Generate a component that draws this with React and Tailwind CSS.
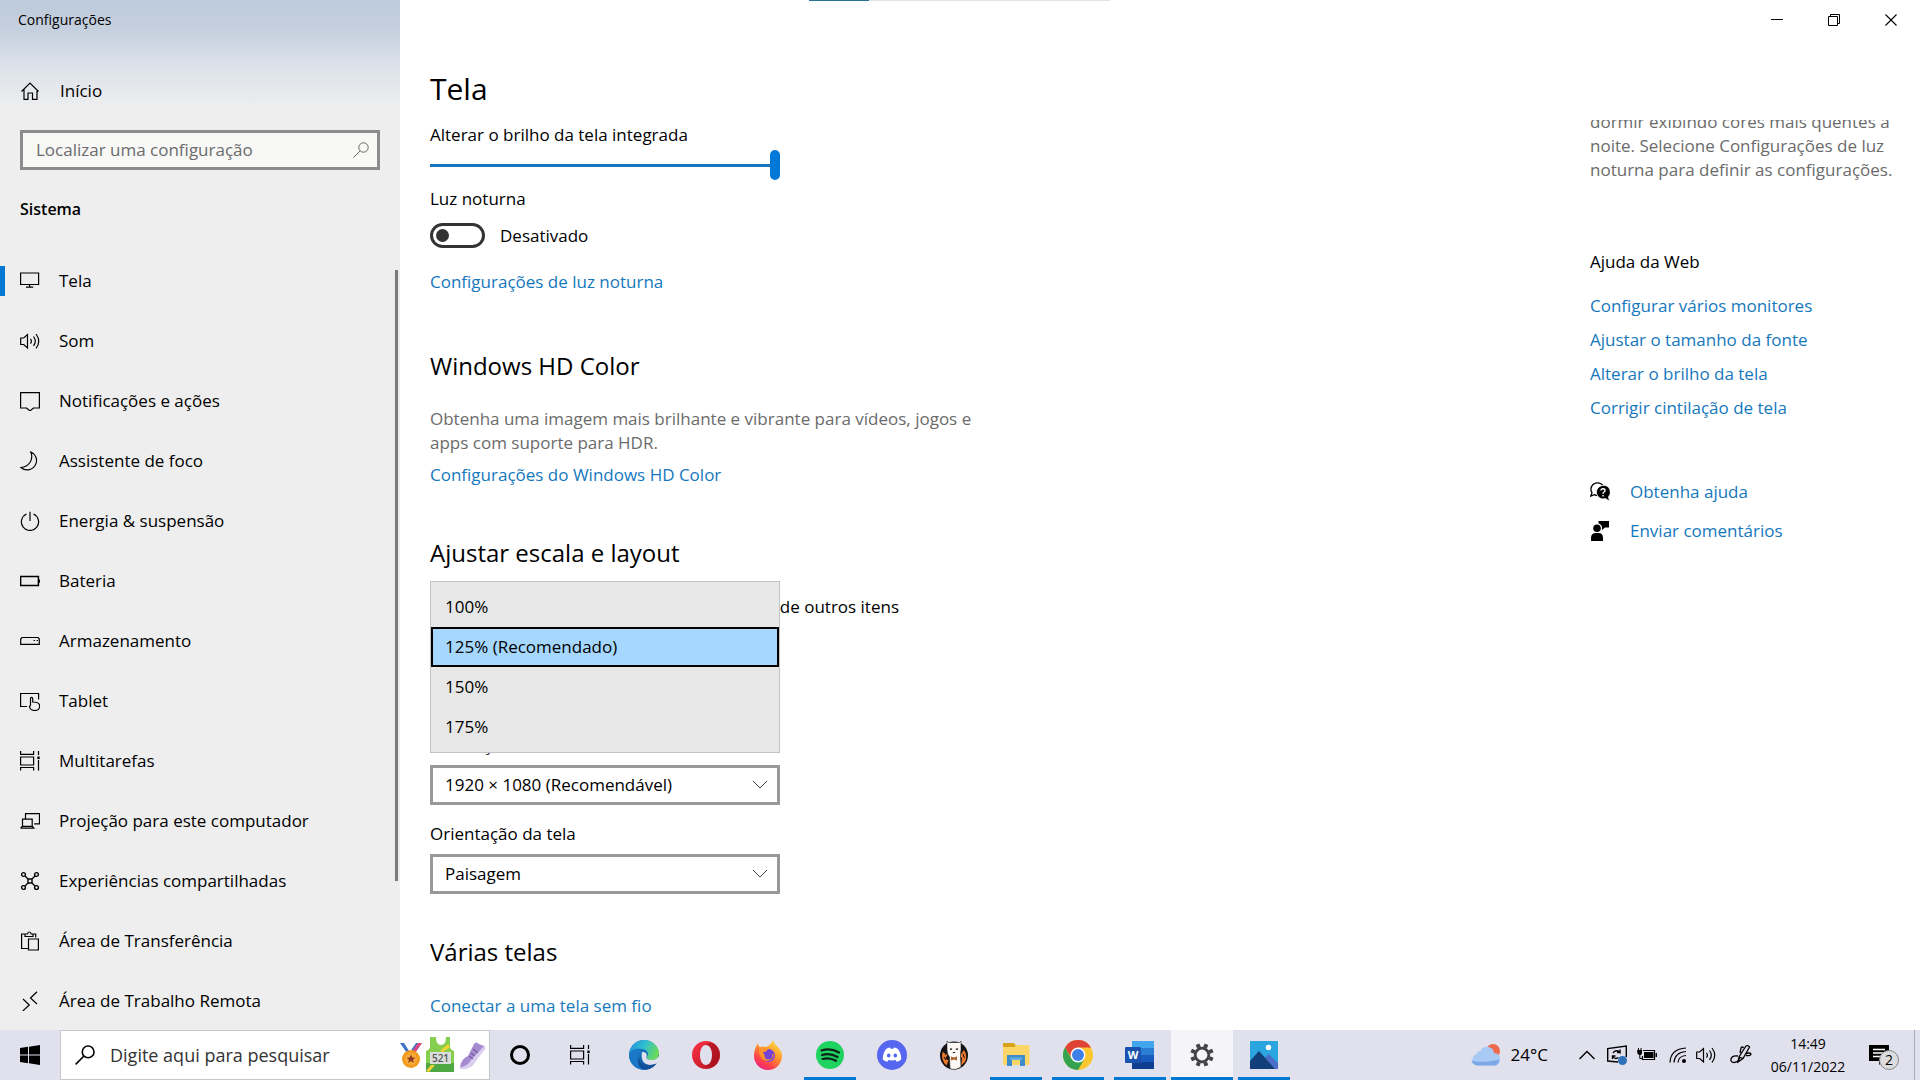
import React, { useState } from "react";

const stroke = { fill: "none", stroke: "currentColor", strokeWidth: 1.2 };

const HomeIcon = () => (
  <svg width="20" height="20" viewBox="0 0 20 20" {...stroke}>
    <path d="M1.5 10.5 10 2l8.500 8.500M4 8.500V18.400h4V12h4.500v6.400H17V8.500" />
  </svg>
);

const SearchIcon = ({ size = 16, width = 1.2 }) => (
  <svg width={size} height={size} viewBox="0 0 16 16" fill="none" stroke="currentColor" strokeWidth={width}>
    <circle cx="10.500" cy="5.500" r="4.700" />
    <path d="M7.200 8.800.500 15.500" />
  </svg>
);

const TaskViewIcon = () => (
  <svg width="20" height="20" viewBox="0 0 20 20" {...stroke}>
    <path d="M.6 0v3.400h13V0M.6 6h13v8h-13zM.6 19.500v-3h13v3M18.500 0v4M18.500 9v10.500" />
    <rect x="17.300" y="5.500" width="2.400" height="2.600" fill="currentColor" stroke="none" />
  </svg>
);

const SpeakerIcon = () => (
  <svg width="20" height="20" viewBox="0 0 20 20" {...stroke}>
    <path d="M.7 7v6.500h3L7.500 17V3.500L3.700 7zM10.500 7.800q1.800 2.400 0 4.800M13.500 5.500q3.600 4.700 0 9.400M16 3q5.500 7.200 0 14.400" />
  </svg>
);

const navIcons = {
  tela: <path d="M.6 2h18v11.500h-18zM9.600 13.500V16M6 16.200h7.200" />,
  notif: <path d="M.6 1.600h18.800V17h-6l-3.400 3-3.400-3h-6z" />,
  foco: <path d="M10.800 1a9.300 9.300 0 1 1-9.800 15.500C8.500 15.800 14 9 10.800 1z" />,
  energia: <path d="M6.500 3a8.600 8.600 0 1 0 7 0M10 .8v9.200" />,
  bateria: <path d="M.6 5.600h17.800v9H.6zM19.300 8.500v3.200" strokeWidth="1.500" />,
  armazenamento: <path d="M2 6.500h16l1.300 1.500v5.400H.7V8zM13.500 9.500h1.500M16.500 9.500H18" />,
  tablet: <path d="M7 15.500H.6v-13h18v6M10.500 14.500V7.600q0-1.200 1.100-1.200t1.100 1.200v3.400q7 0 7 4 0 4.500-4.800 4.500c-3 0-5-1.500-5.500-4l1.100-1" />,
  projecao: <path d="M5.500 8V2.600h14v10.200h-5.300M2.500 8.200h9.700v7.200H2.500zM.6 17.200h13.200l-1.600-2M.6 17.200l1.900-2" />,
  remota: <path d="m3 8 6.300 6-6.500 6M17 .8 10.500 7l6.500 6" />,
  transferencia: <path d="M8 17.500H1.600V3h3M13.500 3h2.200v3.500M8.500 8h9.900v11H8.500zM5 3h2.500q.2-2 1.800-2t1.800 2H13v2.500H5z" />,
};

const SharedIcon = () => (
  <svg width="20" height="20" viewBox="0 0 20 20" {...stroke} strokeWidth="1.400">
    <circle cx="3.500" cy="3.500" r="1.900" />
    <circle cx="16.500" cy="3.500" r="1.900" />
    <circle cx="3.500" cy="16.500" r="1.900" />
    <circle cx="16.500" cy="16.500" r="1.900" />
    <path d="M8 8h4v4H8zM5 5l3 3M15 5l-3 3M5 15l3-3M15 15l-3-3" />
  </svg>
);

const navItems = [
  { id: "tela", label: "Tela" },
  { id: "som", label: "Som" },
  { id: "notif", label: "Notificações e ações" },
  { id: "foco", label: "Assistente de foco" },
  { id: "energia", label: "Energia & suspensão" },
  { id: "bateria", label: "Bateria" },
  { id: "armazenamento", label: "Armazenamento" },
  { id: "tablet", label: "Tablet" },
  { id: "multitarefas", label: "Multitarefas" },
  { id: "projecao", label: "Projeção para este computador" },
  { id: "compartilhadas", label: "Experiências compartilhadas" },
  { id: "transferencia", label: "Área de Transferência" },
  { id: "remota", label: "Área de Trabalho Remota" },
];

const NavIcon = ({ id }) => {
  if (id === "som") return <SpeakerIcon />;
  if (id === "multitarefas") return <TaskViewIcon />;
  if (id === "compartilhadas") return <SharedIcon />;
  return (
    <svg width="20" height="20" viewBox="0 0 20 20" {...stroke}>
      {navIcons[id]}
    </svg>
  );
};

const Sidebar = ({ active, setActive }) => (
  <aside className="relative flex w-[400px] shrink-0 flex-col overflow-hidden bg-[#eeeeee] bg-[linear-gradient(to_bottom,#bccadb_0px,#c7d1df_35px,#dce2ea_65px,#eeeeee_110px)]">
    <div className="flex h-10 shrink-0 items-center px-[18px] text-sm">Configurações</div>
    <a href="#inicio" className="mt-[27px] flex h-12 shrink-0 items-center gap-5 px-5">
      <HomeIcon />
      Início
    </a>
    <div className="mx-5 mt-[15px] flex h-10 shrink-0 items-center border-[3px] border-[#8c8c8a] bg-[#f8f8f7] pr-2 pl-[13px] text-[#666]">
      <input
        type="text"
        aria-label="Localizar uma configuração"
        placeholder="Localizar uma configuração"
        className="min-w-0 flex-1 bg-transparent outline-none placeholder:text-[#6b6b6b]"
      />
      <SearchIcon width={1} />
    </div>
    <h2 className="mt-[27px] shrink-0 px-5 text-base leading-6 font-semibold">Sistema</h2>
    <nav className="mt-[30px] flex flex-col">
      {navItems.map((item) => (
        <button
          key={item.id}
          type="button"
          onClick={() => setActive(item.id)}
          className="flex h-[60px] shrink-0 items-center text-left"
        >
          <span className={active === item.id ? "h-[30px] w-[5px] bg-[#0078d4]" : "h-[30px] w-[5px]"} />
          <span className="mr-[19px] ml-[15px]">
            <NavIcon id={item.id} />
          </span>
          {item.label}
        </button>
      ))}
    </nav>
    {/* scroll thumb */}
    <div className="absolute top-[270px] right-[2px] h-[611px] w-[3px] bg-[#7a7a7a]" />
  </aside>
);

const linkClass = "text-[#1578bd] hover:text-gray-500";

const ComboBox = ({ id, label, options }) => (
  <div className="flex flex-col">
    <label htmlFor={id} className="leading-6">
      {label}
    </label>
    <div className="relative mt-2 w-[350px]">
      <select
        id={id}
        className="block h-10 w-full appearance-none border-[3px] border-[#999] bg-white px-3 outline-none"
      >
        {options.map((option) => (
          <option key={option}>{option}</option>
        ))}
      </select>
      <svg
        width="16"
        height="10"
        viewBox="0 0 16 10"
        fill="none"
        stroke="#444"
        className="pointer-events-none absolute top-[15px] right-3"
      >
        <path d="m1 1 7 7 7-7" />
      </svg>
    </div>
  </div>
);

const scaleOptions = ["100%", "125% (Recomendado)", "150%", "175%"];

const ScalePicker = () => {
  const [scale, setScale] = useState("125% (Recomendado)");

  return (
    <div className="relative mt-[26px]">
      <ComboBox
        id="escala"
        label="Alterar o tamanho do texto, de aplicativos e de outros itens"
        options={["125% (Recomendado)"]}
      />
      <a href="#escala" className="mt-[26px] block leading-6 text-[#1578bd]">
        Configurações de escala avançadas
      </a>
      <ul
        role="listbox"
        aria-label="Escala"
        className="absolute -top-[14px] left-0 z-10 w-[350px] border border-[#c3c3c3] bg-[#e7e7e7] py-[5px]"
      >
        {scaleOptions.map((option) => (
          <li key={option} role="option" aria-selected={scale === option}>
            <button
              type="button"
              onClick={() => setScale(option)}
              className={
                scale === option
                  ? "block h-10 w-full border-2 border-black bg-[#a6d8ff] px-3 text-left"
                  : "block h-10 w-full border-2 border-transparent px-3 text-left"
              }
            >
              {option}
            </button>
          </li>
        ))}
      </ul>
    </div>
  );
};

const DisplaySettings = () => {
  const [nightLight, setNightLight] = useState(false);

  return (
    <section className="flex min-w-0 flex-1 flex-col overflow-hidden pt-[3px] leading-6">
      <label htmlFor="brilho">Alterar o brilho da tela integrada</label>
      <input
        id="brilho"
        type="range"
        defaultValue="100"
        className="mt-[3px] h-[30px] w-[350px] appearance-none bg-[linear-gradient(#1976bd,#1976bd)] bg-[length:100%_3px] bg-center bg-no-repeat [&::-webkit-slider-thumb]:h-[30px] [&::-webkit-slider-thumb]:w-[10px] [&::-webkit-slider-thumb]:appearance-none [&::-webkit-slider-thumb]:rounded-full [&::-webkit-slider-thumb]:bg-[#0078d7]"
      />
      <div className="mt-[7px]">Luz noturna</div>
      <label className="mt-3 flex items-center gap-[15px]">
        <input
          type="checkbox"
          role="switch"
          checked={nightLight}
          onChange={(e) => setNightLight(e.target.checked)}
          className="flex h-[25px] w-[55px] appearance-none items-center rounded-full border-[3px] border-[#333] px-[3px] before:size-[13px] before:rounded-full before:bg-[#333] checked:justify-end"
        />
        {nightLight ? "Ativado" : "Desativado"}
      </label>
      <a href="#luz-noturna" className={`mt-[22px] self-start ${linkClass}`}>
        Configurações de luz noturna
      </a>

      <h2 className="mt-14 text-2xl leading-8">Windows HD Color</h2>
      <p className="mt-[25px] w-[550px] text-[#6b6b6b]">
        Obtenha uma imagem mais brilhante e vibrante para vídeos, jogos e apps com suporte para HDR.
      </p>
      <a href="#hd-color" className={`mt-2 self-start ${linkClass}`}>
        Configurações do Windows HD Color
      </a>

      <h2 className="mt-[50px] text-2xl leading-8">Ajustar escala e layout</h2>
      <ScalePicker />
      <div className="mt-[16px]">
        <ComboBox id="resolucao" label="Resolução da tela" options={["1920 × 1080 (Recomendável)", "1680 × 1050"]} />
      </div>
      <div className="mt-[17px]">
        <ComboBox id="orientacao" label="Orientação da tela" options={["Paisagem", "Retrato"]} />
      </div>

      <h2 className="mt-[42px] text-2xl leading-8">Várias telas</h2>
      <a href="#sem-fio" className={`mt-[26px] self-start ${linkClass}`}>
        Conectar a uma tela sem fio
      </a>
    </section>
  );
};

const helpLinks = [
  "Configurar vários monitores",
  "Ajustar o tamanho da fonte",
  "Alterar o brilho da tela",
  "Corrigir cintilação de tela",
];

const HelpPanel = () => (
  <aside className="w-[330px] shrink-0 overflow-hidden leading-6">
    <p className="-mt-[10px] mr-4 text-[#6b6b6b]">
      dormir exibindo cores mais quentes a noite. Selecione Configurações de luz noturna para definir as configurações.
    </p>
    <h3 className="mt-[68px]">Ajuda da Web</h3>
    <ul className="mt-5 flex flex-col gap-[10px]">
      {helpLinks.map((link) => (
        <li key={link}>
          <a href="#ajuda" className={linkClass}>
            {link}
          </a>
        </li>
      ))}
    </ul>
    <div className="mt-[60px] flex flex-col gap-[15px]">
      <a href="#obter-ajuda" className="flex items-center gap-5">
        <svg width="20" height="20" viewBox="0 0 20 20">
          <path
            d="M7.500.8A6.500 6.500 0 0 0 2 10.800L.8 14l3.700-1.400a6.500 6.500 0 0 0 8.800-8.500A6.500 6.500 0 0 0 7.500.8z"
            fill="#fff"
            stroke="#000"
            strokeWidth="1.300"
          />
          <path
            d="M13 3.400a6.800 6.800 0 1 0 2.500 13.200l4 2.600-1-4.300A6.800 6.800 0 0 0 13 3.400z"
            stroke="#fff"
            strokeWidth="0.800"
          />
          <path d="M11 8.500q0-1.800 2-1.800t2 1.700q0 1-1 1.600t-1 1.700M13 13v1.500" fill="none" stroke="#fff" strokeWidth="1.400" />
        </svg>
        <span className={linkClass}>Obtenha ajuda</span>
      </a>
      <a href="#comentarios" className="flex items-center gap-5">
        <svg width="20" height="20" viewBox="0 0 20 20">
          <path d="M8.500 0H19v6.500h-4L12 9V5.500L10 3 8.500 2.500zM1 20v-3q0-5 5-5h2.500q4.500 0 4.500 5v3z" />
          <circle cx="7" cy="7.300" r="3.800" />
        </svg>
        <span className={linkClass}>Enviar comentários</span>
      </a>
    </div>
  </aside>
);

const WindowControls = () => (
  <div className="flex h-10 justify-end pr-px">
    <button type="button" aria-label="Minimizar" className="flex w-[57px] items-center justify-center">
      <svg width="12" height="12" viewBox="0 0 12 12" stroke="#000">
        <path d="M0 5.500h12" />
      </svg>
    </button>
    <button type="button" aria-label="Restaurar" className="flex w-[57px] items-center justify-center">
      <svg width="12" height="12" viewBox="0 0 12 12" fill="none" stroke="#000">
        <path d="M.5 2.500h9v9h-9zM2.500 2.500v-2h9v9h-2" />
      </svg>
    </button>
    <button type="button" aria-label="Fechar" className="flex w-[57px] items-center justify-center">
      <svg width="12" height="12" viewBox="0 0 12 12" stroke="#000" strokeWidth="1.100">
        <path d="m.5.500 11 11M11.500.500l-11 11" />
      </svg>
    </button>
  </div>
);

const SearchArt = () => (
  <svg width="88" height="38" viewBox="0 0 88 38" className="shrink-0">
    <path d="M0 7h6l7 10-4 3zM22 7h-6L9 17l4 3z" fill="#3f73c8" />
    <path d="M4 7h3l6 9-2 2z" fill="#fff" />
    <path d="M18 7h4l-8 11-3-1z" fill="#e0487f" />
    <circle cx="11" cy="23" r="9" fill="#f39a1d" />
    <circle cx="11" cy="23" r="6" fill="#f7ac3a" />
    <path d="m11 18.500 1.300 3 3.200.2-2.500 2 .9 3.200-2.900-1.800-2.900 1.800.9-3.200-2.500-2 3.200-.2z" fill="#8c3b22" />
    <path d="M30 1h6q0 8 5 8t5-8h4v9q0 4 4 5v21H26V15q4-1 4-5z" fill="#86cf4e" />
    <path d="M26 27h28v9H26z" fill="#4da742" />
    <path d="m40 15 8-7 2 3-7 5zM26 35l5-6h4l-6 7z" fill="#f4d435" />
    <rect x="30" y="16" width="21" height="12" fill="#d9dedb" />
    <text x="40.500" y="26" textAnchor="middle" fontSize="10" fontFamily="Open Sans, sans-serif" fontWeight="600" fill="#555">
      521
    </text>
    <path d="M60 31q1-8 8-11l6-12q2-3 5 0l5 2q2 1 0 4l-9 10q-3 8-12 9-3 0-3-2z" fill="#a68bd0" />
    <path d="M60 31q7 0 11-7L84 10l2 2-10 13q-4 8-13 8-3 0-3-2z" fill="#d9cdf0" />
    <path d="m69 20 4 3m-2-6 4 3m-2-7 5 4" stroke="#5f4a8c" />
  </svg>
);

const EdgeLogo = () => (
  <svg width="30" height="30" viewBox="0 0 30 30">
    <defs>
      <linearGradient id="edgeTop" x1="0" y1="0.200" x2="1" y2="0.500">
        <stop offset="0" stopColor="#2390dc" />
        <stop offset="0.500" stopColor="#2fc0d0" />
        <stop offset="1" stopColor="#6bdc54" />
      </linearGradient>
      <linearGradient id="edgeBottom" x1="0" y1="0" x2="1" y2="1">
        <stop offset="0" stopColor="#1d8bd6" />
        <stop offset="1" stopColor="#104a91" />
      </linearGradient>
    </defs>
    <circle cx="15" cy="15" r="15" fill="url(#edgeBottom)" />
    <path d="M0 14C1 5 8 0 15 0c9 0 15 7 15 13 0 5-4 7-7 7-4 0-6-1-5-3 3-4-1-8-5-8C7 8 2 10 0 14z" fill="url(#edgeTop)" />
    <path d="M13 12q6 0 4.500 5-1 3 5.500 3 4 0 7-4v6q-4 3-9 3-10-1-8-13z" fill="#e1e1ed" />
    <path d="M0 14c3-5 8-6 13-3-6 3-7 15 5 18.700C8 31 0 24 0 14z" fill="#1b78c9" />
    <path d="M10 17c0 7 9 12 17.500 6.500C22 31 13 31 10 26q-2-5 0-9z" fill="#124f9b" />
  </svg>
);

const OperaLogo = () => (
  <svg width="30" height="30" viewBox="0 0 30 30">
    <defs>
      <linearGradient id="operaRed" x1="0" y1="0" x2="1" y2="1">
        <stop offset="0" stopColor="#ff3349" />
        <stop offset="1" stopColor="#b00f1c" />
      </linearGradient>
    </defs>
    <path fillRule="evenodd" d="M15 1a14 14 0 1 0 0 28 14 14 0 1 0 0-28m0 4c4 0 6 4.500 6 10s-2 10-6 10-6-4.500-6-10 2-10 6-10" fill="url(#operaRed)" />
    <path d="M15 5c3-3 6-3 9-.5 7 6 6 16 0 21-3 2-6 2-9-.5 4 0 6-4.500 6-10S19 5 15 5z" fill="#9d1019" fillOpacity="0.550" />
  </svg>
);

const FirefoxLogo = () => (
  <svg width="30" height="30" viewBox="0 0 30 30">
    <defs>
      <linearGradient id="foxBody" x1="0.800" y1="0" x2="0.200" y2="1">
        <stop offset="0" stopColor="#ffe03f" />
        <stop offset="0.400" stopColor="#ff9a2e" />
        <stop offset="0.750" stopColor="#ff3f4b" />
        <stop offset="1" stopColor="#e3228f" />
      </linearGradient>
    </defs>
    <path d="M20 0q1 4 4 6 5 5 5 10a14 14 0 0 1-28 0Q1 9 5 3q0 3 2 4 3-1 6 0 5-2 7-7z" fill="url(#foxBody)" />
    <circle cx="15.500" cy="15.500" r="6.500" fill="#7543d8" />
    <path d="M6 9q4-3 9 0-1 3-5 3 1 4 6 3 3-1 5-1-1 7-7 7-8-1-8-12z" fill="#ff9428" />
    <circle cx="15.500" cy="15.500" r="4" fill="#7543d8" />
  </svg>
);

const SpotifyLogo = () => (
  <svg width="28" height="28" viewBox="0 0 28 28">
    <circle cx="14" cy="14" r="14" fill="#1ed35f" />
    <path d="M5.500 9.500q9-3 17.500 2M6 14q8-2.500 15.500 2M6.500 18q7-2 13.500 1.800" fill="none" stroke="#10231a" strokeWidth="2.200" strokeLinecap="round" />
  </svg>
);

const DiscordLogo = () => (
  <svg width="30" height="30" viewBox="0 0 30 30">
    <circle cx="15" cy="15" r="15" fill="#5567f0" />
    <path d="M9 9q2-1.300 4-1.500l.7 1.300h2.600L17 7.500q2 .2 4 1.500 3.500 5 3.200 10.500-2 1.700-4.500 2.300L18.500 20q-3.500.8-7 0l-1.200 1.800q-2.500-.6-4.500-2.300Q5.500 14 9 9z" fill="#fff" />
    <ellipse cx="11.700" cy="15.500" rx="1.800" ry="2" fill="#5567f0" />
    <ellipse cx="18.300" cy="15.500" rx="1.800" ry="2" fill="#5567f0" />
  </svg>
);

const MascotLogo = () => (
  <svg width="30" height="30" viewBox="0 0 30 30">
    <circle cx="15" cy="15.500" r="14" fill="#141212" />
    <path d="M3.500 12q-2 8 4 13.500l2-5-3-2 2-4zM25 10q4 6 1 12l-4 3.500 1-7-2-3z" fill="#e8792b" />
    <path d="M5 17l2 3M24 14l1.500 4M6 13l1 2" stroke="#141212" />
    <path
      d="M8 1 9.500 2.500h11L22 1v9q-.5 3-.5 6l.5 11q-6 4-11 1.500L10.500 17Q8 14 8 10z"
      fill="#fbf8f5"
      stroke="#222"
      strokeWidth="0.600"
    />
    <path d="M11 9.500q1-1 2 0M17 9.500q1-1 2 0M13.800 12.500h2.400" fill="none" stroke="#222" strokeWidth="1.200" />
    <path d="m12 16.500 3 1 3-1v4l-3-1-3 1z" fill="#a8622c" />
  </svg>
);

const ExplorerLogo = () => (
  <svg width="28" height="24" viewBox="0 0 28 24">
    <path d="M1 0h11l2 3v3H1z" fill="#d9a21b" />
    <path d="M1 4h12l1-2h12q1.500 0 1.500 1.500V22H1z" fill="#fbd667" />
    <path d="M5 12h18v11h-5v-6h-8v6H5z" fill="#3d8dcc" />
    <path d="M8 14.500h12V17H8z" fill="#67aee0" />
  </svg>
);

const ChromeLogo = () => (
  <svg width="30" height="30" viewBox="0 0 30 30">
    <circle cx="15" cy="15" r="15" fill="#fcc62f" />
    <path d="M2 7.500A15 15 0 0 1 28 7.500H15L9 18.500z" fill="#df4335" />
    <path d="M2 7.500A15 15 0 0 0 15 30l6.500-11.300L8.500 18.700z" fill="#33a350" />
    <circle cx="15" cy="15" r="7.500" fill="#fff" />
    <circle cx="15" cy="15" r="6" fill="#3e7fe8" />
  </svg>
);

const WordLogo = () => (
  <svg width="30" height="28" viewBox="0 0 30 28">
    <path d="M7 0h22v7H7z" fill="#41a5ee" />
    <path d="M7 7h22v7H7z" fill="#2b7cd3" />
    <path d="M7 14h22v7H7z" fill="#185abd" />
    <path d="M7 21h22v7H7z" fill="#103f91" />
    <rect x="0" y="6" width="16" height="16" rx="1" fill="#1a52b0" />
    <text x="8" y="18" textAnchor="middle" fontSize="11" fontWeight="700" fontFamily="Open Sans, sans-serif" fill="#fff">
      W
    </text>
  </svg>
);

const SettingsLogo = () => (
  <svg width="24" height="24" viewBox="0 0 24 24" fill="none" stroke="#434247">
    <circle cx="12" cy="12" r="6.800" strokeWidth="2.800" />
    <g strokeWidth="4">
      <path d="m15 4.800 1.500-3.600M9 4.800 7.500 1.200M15 19.200l1.500 3.600M9 19.200l-1.500 3.600M4.800 9 1.200 7.500M19.200 9l3.600-1.500M4.800 15l-3.600 1.500M19.200 15l3.600 1.500" />
    </g>
  </svg>
);

const PhotosLogo = () => (
  <svg width="28" height="28" viewBox="0 0 28 28">
    <rect width="28" height="28" rx="1" fill="#2aa5e0" />
    <path d="m10 22 8.500-9L28 22v6H10z" fill="#4b6fc8" />
    <path d="M0 20 9 10l16 18H0z" fill="#123e79" />
    <circle cx="18.500" cy="6.500" r="2.700" fill="#fff" />
  </svg>
);

const taskbarApps = [
  { name: "Edge", icon: <EdgeLogo /> },
  { name: "Opera", icon: <OperaLogo /> },
  { name: "Firefox", icon: <FirefoxLogo /> },
  { name: "Spotify", icon: <SpotifyLogo />, open: true },
  { name: "Discord", icon: <DiscordLogo /> },
  { name: "Mascote", icon: <MascotLogo /> },
  { name: "Explorador de Arquivos", icon: <ExplorerLogo />, open: true },
  { name: "Chrome", icon: <ChromeLogo />, open: true },
  { name: "Word", icon: <WordLogo />, open: true },
  { name: "Configurações", icon: <SettingsLogo />, open: true, focused: true },
  { name: "Fotos", icon: <PhotosLogo />, open: true },
];

const TaskbarApp = ({ app }) => (
  <button
    type="button"
    aria-label={app.name}
    className={
      app.focused
        ? "relative flex w-[62px] items-center justify-center bg-[#f4f4f9]"
        : "relative flex w-[62px] items-center justify-center"
    }
  >
    {app.icon}
    {app.open && (
      <span
        className={
          app.focused
            ? "absolute inset-x-0 bottom-0 h-[3px] bg-[#0078d4]"
            : "absolute inset-x-[5px] bottom-0 h-[3px] bg-[#0078d4]"
        }
      />
    )}
  </button>
);

const Tray = () => (
  <div className="ml-auto flex items-center">
    <button type="button" className="flex items-center gap-[10px]">
      <svg width="30" height="22" viewBox="0 0 30 22">
        <circle cx="22" cy="7" r="7" fill="#ee6a4c" />
        <path d="M6 21.500a6 6 0 0 1-.5-11.500q1-3 4-3 2-5 8-4 5 1 5.500 6 6 .5 6 6 0 6.500-6 6.500z" fill="#a9caf5" />
        <path d="M6 21.500q-5-1-5.500-5 9 3 28-1-1 6-5.500 6z" fill="#7fa9e6" />
      </svg>
      24°C
    </button>
    <svg width="20" height="10" viewBox="0 0 20 10" {...stroke} strokeWidth="1.400" className="ml-[29px]">
      <path d="m2.500 9 7.500-7.500L17.500 9" />
    </svg>
    <svg width="20" height="20" viewBox="0 0 20 20" {...stroke} strokeWidth="1.400" className="ml-[10px]">
      <path d="M11 17 .7 16V3.500L19.300 1v11M6 8q2-3.500 6-1.500l1 1V4.500M13 7.500h-3M5.500 14v-3h3M5.500 11q2.500 4 6 1.500" />
      <circle cx="15.500" cy="15.500" r="4.500" fill="#2f72ba" stroke="none" />
    </svg>
    <svg width="20" height="14" viewBox="0 0 20 14" className="ml-[10px]">
      <path d="M6 2.500h11.500v9H5.500V8" fill="none" stroke="#000" strokeWidth="1.200" />
      <path d="M7 4h9.500v6H7zM18.500 5H20v4h-1.500zM0 2h5v3.500q-.5 1.500-2 1.500T.5 5.500z" />
      <path d="M1.500 0v2M4 0v2M2.800 7v3.500H5" stroke="#000" fill="none" />
    </svg>
    <svg width="18" height="18" viewBox="0 0 18 18" {...stroke} className="ml-3">
      <path d="M1 16.500Q1.500 3 17 2M5 16.500Q5.500 6.500 17 5.500M9 16.500Q9.500 10 17 9.500" />
      <circle cx="15" cy="15" r="2" fill="currentColor" stroke="none" />
    </svg>
    <span className="ml-[9px]">
      <SpeakerIcon />
    </span>
    <svg width="22" height="20" viewBox="0 0 22 20" {...stroke} strokeWidth="1.300" className="ml-[14px]">
      <path d="M8 17 9 12 16 1q2-1 3.500 1L13 13.500zM9 12l4 1.500M8 11q-6-1-7 3-.5 3.500 3 3.500 4 0 6-5M15 9q5-2 6 0 0 2-5 1.500M13.500 3q-1-2-2.500 0L10 8" />
    </svg>
    <div className="ml-4 flex w-20 flex-col items-center text-sm leading-[23px]">
      <span>14:49</span>
      <span>06/11/2022</span>
    </div>
    <button type="button" aria-label="Notificações" className="relative ml-[21px] h-[30px] w-[30px]">
      <svg width="20" height="20" viewBox="0 0 20 20">
        <path d="M0 0h20v16h-6l-4 4v-4H0z" />
        <path d="M4 4.500h12M4 8h12M4 11.500h8" stroke="#fff" strokeWidth="1.400" />
      </svg>
      <span className="absolute right-0 bottom-0 flex size-5 items-center justify-center rounded-full border border-[#888] bg-[#dcdcdf] text-sm leading-none">
        2
      </span>
    </button>
    <span className="ml-[15px] h-[50px] w-[6px] border-l border-[#a9a9b5]" />
  </div>
);

const Taskbar = () => (
  <footer className="flex h-[50px] shrink-0 bg-[#e1e1ed]">
    <button type="button" aria-label="Iniciar" className="flex w-[60px] items-center justify-center">
      <svg width="20" height="20" viewBox="0 0 20 20">
        <path d="M0 3 8 1.800v7.700H0zM9 1.700 20 0v9.500H9zM0 10.500h8v7.700L0 17zM9 10.500h11V20L9 18.300z" />
      </svg>
    </button>
    <div className="flex w-[430px] items-center border border-[#c6c6ce] bg-white pr-px pl-[14px]">
      <SearchIcon size={20} width={1.3} />
      <input
        type="text"
        aria-label="Digite aqui para pesquisar"
        placeholder="Digite aqui para pesquisar"
        className="ml-[15px] min-w-0 flex-1 bg-transparent text-lg outline-none placeholder:text-[#333]"
      />
      <SearchArt />
    </div>
    <button type="button" aria-label="Cortana" className="flex w-[60px] items-center justify-center">
      <span className="size-5 rounded-full border-[3px] border-black" />
    </button>
    <button type="button" aria-label="Visão de Tarefas" className="mr-[3px] flex w-[60px] items-center justify-center">
      <TaskViewIcon />
    </button>
    {taskbarApps.map((app) => (
      <TaskbarApp key={app.name} app={app} />
    ))}
    <Tray />
  </footer>
);

const App = () => {
  const [active, setActive] = useState("tela");

  return (
    <div className="flex h-screen flex-col bg-white font-['Open_Sans','Noto_Sans',sans-serif] text-[17px] text-black">
      <div className="flex min-h-0 flex-1">
        <Sidebar active={active} setActive={setActive} />
        <main className="relative flex min-w-0 flex-1 flex-col">
          {/* edge of the window behind */}
          <div className="absolute top-0 left-[409px] flex h-px w-[301px] bg-[#e2e2e2]">
            <div className="w-[60px] bg-[#2b7099]" />
          </div>
          <header className="h-[120px] shrink-0">
            <WindowControls />
            <h1 className="mt-[29px] ml-[30px] text-3xl leading-10">Tela</h1>
          </header>
          <div className="flex min-h-0 flex-1 pl-[30px]">
            <DisplaySettings />
            <HelpPanel />
          </div>
        </main>
      </div>
      <Taskbar />
    </div>
  );
};

export default App;
